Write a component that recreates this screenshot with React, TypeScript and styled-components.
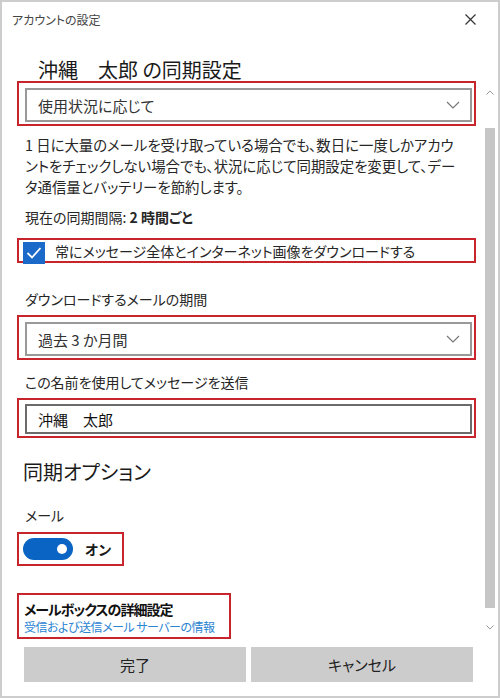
import * as React from 'react';
import styled, { createGlobalStyle } from 'styled-components';

const GlobalStyle = createGlobalStyle`
  html, body {
    margin: 0;
    padding: 0;
    background: #ffffff;
  }
  body {
    font-family: "Noto Sans CJK JP", "Noto Sans", sans-serif;
    font-feature-settings: "palt";
    color: #1f1f1f;
  }
`

const Window = styled.div`
  box-sizing: border-box;
  width: 500px;
  height: 698px;
  border: 2px solid #cdcdcd;
  display: flex;
  flex-direction: column;
  background: #fff;
  overflow: hidden;
`

const TitleBar = styled.div`
  height: 34px;
  flex: 0 0 34px;
  display: flex;
  align-items: center;
  justify-content: space-between;
  padding: 0 22px 0 10px;
`

const Title = styled.span`
  font-size: 12px;
  color: #444;
`

const Body = styled.div`
  flex: 0 0 603px;
  display: flex;
`

const Content = styled.div`
  flex: 1;
  padding: 22px 12px 0 23px;
  display: flex;
  flex-direction: column;
  align-items: stretch;
  min-width: 0;
`

const Heading = styled.h1<{ $indent?: number; $mt?: number }>`
  margin: ${p => p.$mt ?? 0}px 0 0 ${p => p.$indent ?? 0}px;
  font-size: 20px;
  font-weight: 400;
  line-height: ${p => (p.$indent && p.$indent > 0 ? 24 : 28)}px;
  color: #1a1a1a;
  white-space: pre;
`

const Highlight = styled.div<{ $mt: number; $pad: string; $fit?: boolean }>`
  margin: ${p => p.$mt}px -4px 0 -8px;
  padding: ${p => p.$pad};
  border: 2px solid #c8242b;
  ${p => p.$fit && 'align-self: flex-start; margin-right: 0;'}
`

const Select = styled.div`
  box-sizing: border-box;
  height: 34px;
  border: 2px solid #999;
  display: flex;
  align-items: center;
  justify-content: space-between;
  padding: 0 10px 0 11px;
  font-size: 15px;
  color: #333;
`

const TextInput = styled.div`
  box-sizing: border-box;
  height: 30px;
  border: 2px solid #6b6b6b;
  display: flex;
  align-items: center;
  padding: 0 11px;
  font-size: 15px;
  color: #111;
  white-space: pre;
`

const Paragraph = styled.p`
  margin: 8px 0 0;
  font-size: 14.4px;
  line-height: 21px;
  color: #262626;
  white-space: nowrap;
`

const Label = styled.div<{ $mt: number }>`
  margin-top: ${p => p.$mt}px;
  font-size: 14px;
  line-height: 21px;
  color: #262626;
`

const CheckRow = styled.div`
  height: 20px;
  display: flex;
  align-items: flex-start;
  gap: 10px;
`

const CheckBox = styled.span`
  flex: 0 0 22px;
  width: 22px;
  height: 22px;
  margin-top: 1px;
  background: #1b6ac9;
  display: flex;
  align-items: center;
  justify-content: center;
`

const CheckText = styled.span`
  font-size: 14px;
  line-height: 20px;
  color: #262626;
`

const ToggleRow = styled.div`
  display: flex;
  align-items: center;
  gap: 12px;
`

const Toggle = styled.span<{ $on: boolean }>`
  box-sizing: border-box;
  width: 50px;
  height: 22px;
  border-radius: 11px;
  background: ${p => (p.$on ? '#0a64c4' : '#fff')};
  display: flex;
  align-items: center;
  justify-content: ${p => (p.$on ? 'flex-end' : 'flex-start')};
  padding: 0 6px;
`

const Knob = styled.span`
  width: 10px;
  height: 10px;
  border-radius: 50%;
  background: #fff;
`

const ToggleText = styled.span`
  font-size: 14px;
  font-weight: 700;
  color: #1a1a1a;
`

const Strong = styled.div`
  font-size: 14px;
  font-weight: 700;
  letter-spacing: -1px;
  line-height: 20px;
  color: #111;
`

const Link = styled.a`
  display: block;
  font-size: 12px;
  letter-spacing: -0.5px;
  line-height: 16px;
  color: #2a84d2;
  text-decoration: none;
`

const Scrollbar = styled.div`
  flex: 0 0 12px;
  width: 12px;
  margin: 47px 2px 3px 0;
  display: flex;
  flex-direction: column;
`

const ScrollArrow = styled.div`
  height: 18px;
  display: flex;
  align-items: center;
  justify-content: center;
`

const Track = styled.div`
  flex: 1;
  display: flex;
  flex-direction: column;
  padding: 27px 1px 10px;
`

const Thumb = styled.div`
  flex: 1;
  background: #c6c6c6;
`

const Footer = styled.div`
  flex: 1;
  display: flex;
  gap: 5px;
  padding: 8px 25px 0 22px;
  align-items: flex-start;
`

const Button = styled.button`
  flex: 1;
  height: 35px;
  border: none;
  background: #cccccc;
  font-family: inherit;
  font-feature-settings: "palt";
  font-size: 15px;
  color: #222;
  padding: 0;
`

const Chevron = () => (
  <svg width="14" height="8" viewBox="0 0 14 8">
    <polyline points="1,1 7,7 13,1" fill="none" stroke="#777" strokeWidth="1.2" />
  </svg>
)

const App = () => (
  <>
    <GlobalStyle />
    <Window>
      <TitleBar>
        <Title>アカウントの設定</Title>
        <svg width="11" height="11" viewBox="0 0 11 11">
          <path d="M0.5 0.5 L10.5 10.5 M10.5 0.5 L0.5 10.5" stroke="#333" strokeWidth="1.2" />
        </svg>
      </TitleBar>
      <Body>
        <Content>
          <Heading $indent={13}>沖縄　太郎 の同期設定</Heading>
          <Highlight $mt={-1} $pad="5px 2px 2px 6px">
            <Select>
              <span>使用状況に応じて</span>
              <Chevron />
            </Select>
          </Highlight>
          <Paragraph>
            1 日に大量のメールを受け取っている場合でも、数日に一度しかアカウ<br />
            ントをチェックしない場合でも、状況に応じて同期設定を変更して、デー<br />
            タ通信量とバッテリーを節約します。
          </Paragraph>
          <Label $mt={10}>
            現在の同期間隔: <b>2 時間ごと</b>
          </Label>
          <Highlight $mt={10} $pad="1px 2px 0 4px">
            <CheckRow>
              <CheckBox>
                <svg width="16" height="14" viewBox="0 0 16 14">
                  <polyline points="1.5,7 6,11.5 14.5,2" fill="none" stroke="#fff" strokeWidth="1.8" />
                </svg>
              </CheckBox>
              <CheckText>常にメッセージ全体とインターネット画像をダウンロードする</CheckText>
            </CheckRow>
          </Highlight>
          <Label $mt={26}>ダウンロードするメールの期間</Label>
          <Highlight $mt={5} $pad="5px 2px 2px 6px">
            <Select>
              <span>過去 3 か月間</span>
              <Chevron />
            </Select>
          </Highlight>
          <Label $mt={12}>この名前を使用してメッセージを送信</Label>
          <Highlight $mt={5} $pad="4px 2px 2px 6px">
            <TextInput>沖縄　太郎</TextInput>
          </Highlight>
          <Heading $mt={20} $indent={-2}>同期オプション</Heading>
          <Label $mt={19}>メール</Label>
          <Highlight $mt={6} $pad="4px 11px 4px 4px" $fit>
            <ToggleRow>
              <Toggle $on>
                <Knob />
              </Toggle>
              <ToggleText>オン</ToggleText>
            </ToggleRow>
          </Highlight>
          <Highlight $mt={27} $pad="4px 14px 2px 5px" $fit>
            <Strong>メールボックスの詳細設定</Strong>
            <Link>受信および送信メール サーバーの情報</Link>
          </Highlight>
        </Content>
        <Scrollbar>
          <ScrollArrow>
            <svg width="8" height="5" viewBox="0 0 8 5">
              <polyline points="0.5,4.5 4,1 7.5,4.5" fill="none" stroke="#999" strokeWidth="1" />
            </svg>
          </ScrollArrow>
          <Track>
            <Thumb />
          </Track>
          <ScrollArrow>
            <svg width="8" height="5" viewBox="0 0 8 5">
              <polyline points="0.5,0.5 4,4 7.5,0.5" fill="none" stroke="#999" strokeWidth="1" />
            </svg>
          </ScrollArrow>
        </Scrollbar>
      </Body>
      <Footer>
        <Button>完了</Button>
        <Button>キャンセル</Button>
      </Footer>
    </Window>
  </>
)

export default App
